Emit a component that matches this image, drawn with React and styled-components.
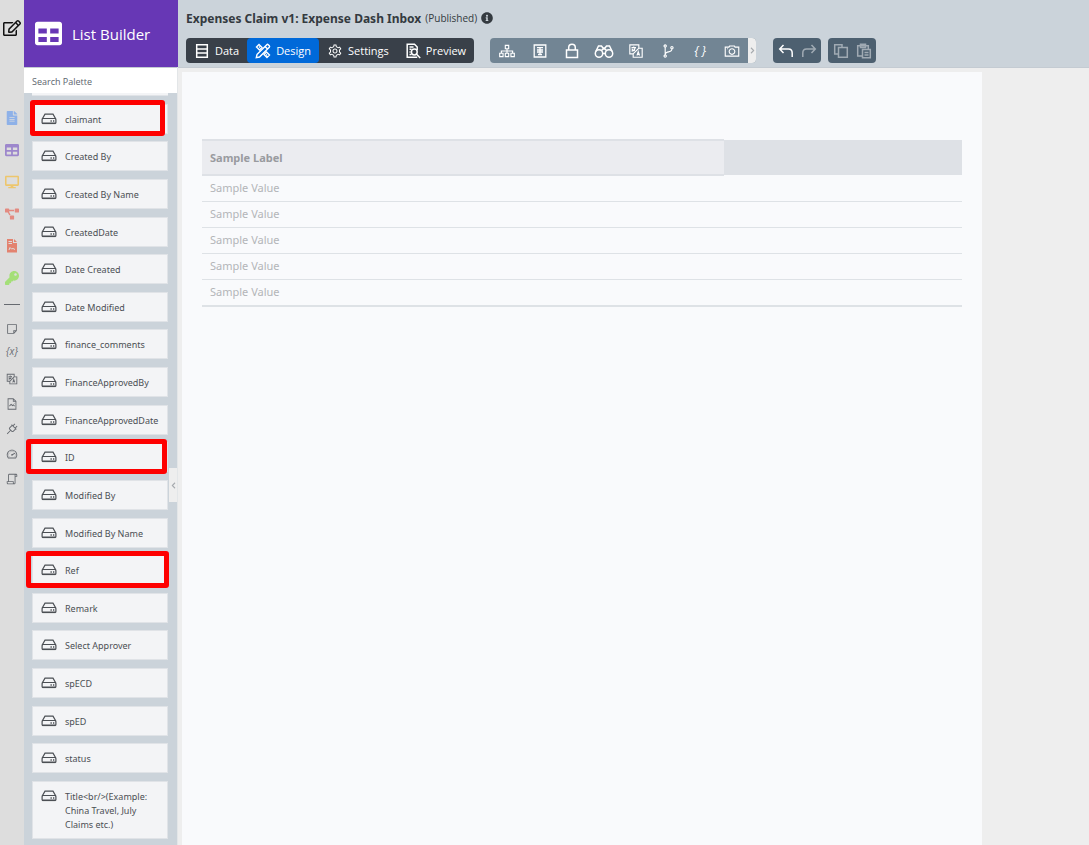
import React from "react";
import styled, { createGlobalStyle } from "styled-components";
import {
  FaChevronLeft,
  FaChevronRight,
  FaDesktop,
  FaFileAlt,
  FaInfoCircle,
  FaKey,
  FaProjectDiagram,
  FaRegEdit,
  FaTable,
} from "react-icons/fa";
import {
  LiaCameraSolid,
  LiaCodeBranchSolid,
  LiaCogSolid,
  LiaFileImage,
  LiaLanguageSolid,
  LiaPlugSolid,
  LiaScrollSolid,
  LiaSitemapSolid,
  LiaStickyNoteSolid,
  LiaTachometerAltSolid,
} from "react-icons/lia";

const fields = [
  { label: "claimant", mark: "-5px 2px -3px -3px" },
  { label: "Created By" },
  { label: "Created By Name" },
  { label: "CreatedDate" },
  { label: "Date Created" },
  { label: "Date Modified" },
  { label: "finance_comments" },
  { label: "FinanceApprovedBy" },
  { label: "FinanceApprovedDate" },
  { label: "ID", mark: "-4px 0 -3px -7px" },
  { label: "Modified By" },
  { label: "Modified By Name" },
  { label: "Ref", mark: "-5px -2px -4px -7px" },
  { label: "Remark" },
  { label: "Select Approver" },
  { label: "spECD" },
  { label: "spED" },
  { label: "status" },
  { label: "Title<br/>(Example: China Travel, July Claims etc.)" },
];

const rows = [1, 2, 3, 4, 5];

const Line = ({ children, size = 16, width = 1.5, box = 16 }) => (
  <svg
    width={size}
    height={size}
    viewBox={`0 0 ${box} ${box}`}
    fill='none'
    stroke='currentColor'
    strokeWidth={width}
    aria-hidden='true'
  >
    {children}
  </svg>
);

const DriveIcon = () => (
  <Line width={1.2}>
    <path d='M1.200 8 4 3.200h8L14.800 8' />
    <rect x='1.100' y='7.500' width='13.800' height='5' rx='1' />
    <path d='M1.500 12.300h13' strokeWidth='1.600' />
    <path d='M9.500 10h1.300M12 10h1.300' strokeWidth='1.400' />
  </Line>
);

const DataIcon = () => (
  <Line>
    <path d='M2.700 1.700h10.600v12.600H2.700zM2.700 5.900h10.600M2.700 10.100h10.600' />
  </Line>
);

const DesignIcon = () => (
  <Line width={1.4}>
    <path d='M1.500 4 4 1.500l3 3L4.500 7zM9 11.500 11.500 9l3 3-2.500 2.500z' />
    <path d='M4 4.500 5 3.500M11 12.500l1-1' />
    <path d='M2 11.500 11.800 1.700a1 1 0 0 1 1.400 0l1.100 1.100a1 1 0 0 1 0 1.400L4.500 14l-3.200.700zM10 3.500 12.500 6' />
  </Line>
);

const PreviewIcon = () => (
  <Line>
    <path d='M12.200 7V4L9.500 1.300H2.200v12.900h10' />
    <path d='M4.500 4h4M4.500 6.300h2M4.500 9h1M4.500 11.500h2' />
    <circle cx='9.300' cy='9' r='2.900' />
    <path d='m11.400 11.100 3.800 4' />
  </Line>
);

const CurrencyIcon = () => (
  <Line width={1.3}>
    <path d='M2.200 2h11.600v12H2.200z' />
    <path d='M5 4.700h6M5 7h6M5 9h6M8 4.500v7.500M6 11.500h4' />
  </Line>
);

const LockIcon = () => (
  <Line>
    <path d='M2.500 7h11v7.500h-11zM4.700 7V4.500a3.300 3.300 0 0 1 6.600 0V7' />
  </Line>
);

const BinocularsIcon = () => (
  <Line size={20} box={20} width={1.5}>
    <circle cx='5' cy='12.500' r='3.700' />
    <circle cx='15' cy='12.500' r='3.700' />
    <path d='M1.800 10.500 4.500 5h3L9 7h2l1.500-2h3l2.700 5.500M8.600 12.500h2.800M7.500 9.500 9 8h2l1.500 1.500' />
  </Line>
);

const UndoIcon = () => (
  <Line>
    <path d='M5.500 2 1.700 6l3.800 4M2 6h8.500q3.700 0 3.700 4v4' />
  </Line>
);

const RedoIcon = () => (
  <Line>
    <path d='M10.500 2 14.300 6l-3.800 4M14 6H5.500Q1.800 6 1.800 10v4' />
  </Line>
);

const CopyIcon = () => (
  <Line>
    <path d='M5 11H1.700V1.700H9V4M5.500 4.500h8.800v9.800H5.500z' />
  </Line>
);

const PasteIcon = () => (
  <Line>
    <path d='M6 13H1.700V2.700h10.600V6M4.500 2v2.500h5V1.200h-5zM6.500 6.500h7.800v8.300H6.500zM8.500 9.500h4M8.500 12h4' />
  </Line>
);

const ReportIcon = () => (
  <svg width='12' height='14' viewBox='0 0 12 14' aria-hidden='true'>
    <path fill='currentColor' d='M1 0h6v4h4v9.500H1z' />
    <path fill='currentColor' d='M8 0l3 3H8z' />
    <path
      fill='none'
      stroke='#dddddd'
      strokeWidth='1'
      d='M2.500 2.500H6M2.500 4.500H6M3 11l1-2.500L5.500 10l1.500-.500 2 1'
    />
  </svg>
);

const App = () => {
  return (
    <>
      <GlobalStyle />
      <Page>
        <Rail aria-label='Builders'>
          <EditLink href='#edit' aria-label='Edit'>
            <FaRegEdit />
          </EditLink>
          <RailLink href='#form' $color='#8eb1e8' aria-label='Form'>
            <FaFileAlt />
          </RailLink>
          <RailLink href='#list' $color='#9d87cc' aria-label='List'>
            <FaTable />
          </RailLink>
          <RailLink href='#ui' $color='#edc66d' aria-label='UI'>
            <FaDesktop />
          </RailLink>
          <RailLink href='#process' $color='#e38a80' aria-label='Process'>
            <FaProjectDiagram />
          </RailLink>
          <RailLink href='#report' $color='#e38370' aria-label='Report'>
            <ReportIcon />
          </RailLink>
          <RailLink href='#api' $color='#a4df78' aria-label='API'>
            <FaKey />
          </RailLink>
          <Divider />
          <ToolLink href='#notes' aria-label='Notes'>
            <LiaStickyNoteSolid />
          </ToolLink>
          <ToolLink href='#variables'>
            <i>{"{x}"}</i>
          </ToolLink>
          <ToolLink href='#language' aria-label='Language'>
            <LiaLanguageSolid />
          </ToolLink>
          <ToolLink href='#resources' aria-label='Resources'>
            <LiaFileImage />
          </ToolLink>
          <ToolLink href='#plugins' aria-label='Plugins'>
            <LiaPlugSolid />
          </ToolLink>
          <ToolLink href='#performance' aria-label='Performance'>
            <LiaTachometerAltSolid />
          </ToolLink>
          <ToolLink href='#logs' aria-label='Logs'>
            <LiaScrollSolid />
          </ToolLink>
        </Rail>

        <Sidebar>
          <Brand>
            <FaTable />
            <span>List Builder</span>
          </Brand>
          <Search placeholder='Search Palette' aria-label='Search Palette' />
          <Palette>
            <ItemEdge />
            {fields.map(({ label, mark }) => (
              <Item key={label}>
                <DriveIcon />
                <span>{label}</span>
                {mark && <Mark $inset={mark} />}
              </Item>
            ))}
          </Palette>
          <Collapse aria-label='Collapse palette'>
            <FaChevronLeft />
          </Collapse>
        </Sidebar>

        <Main>
          <Header>
            <Title>
              Expenses Claim v1: Expense Dash Inbox <small>(Published)</small>
              <FaInfoCircle />
            </Title>
            <Toolbar>
              <Tabs>
                <Tab>
                  <DataIcon />
                  Data
                </Tab>
                <Tab $active>
                  <DesignIcon />
                  Design
                </Tab>
                <Tab>
                  <LiaCogSolid />
                  Settings
                </Tab>
                <Tab>
                  <PreviewIcon />
                  Preview
                </Tab>
              </Tabs>
              <Tools>
                <Tool aria-label='Tree'>
                  <LiaSitemapSolid />
                </Tool>
                <Tool aria-label='Currency'>
                  <CurrencyIcon />
                </Tool>
                <Tool aria-label='Permission'>
                  <LockIcon />
                </Tool>
                <Tool aria-label='Find usages'>
                  <BinocularsIcon />
                </Tool>
                <Tool aria-label='Translate'>
                  <LiaLanguageSolid />
                </Tool>
                <Tool aria-label='Compare'>
                  <LiaCodeBranchSolid />
                </Tool>
                <Tool>
                  <i>{"{ }"}</i>
                </Tool>
                <Tool aria-label='Screenshot'>
                  <LiaCameraSolid />
                </Tool>
                <More aria-label='More tools'>
                  <FaChevronRight />
                </More>
              </Tools>
              <Actions>
                <Action aria-label='Undo'>
                  <UndoIcon />
                </Action>
                <Action aria-label='Redo' disabled>
                  <RedoIcon />
                </Action>
              </Actions>
              <Actions>
                <Action aria-label='Copy' disabled>
                  <CopyIcon />
                </Action>
                <Action aria-label='Paste' disabled>
                  <PasteIcon />
                </Action>
              </Actions>
            </Toolbar>
          </Header>
          <Workspace>
            <Canvas>
              <Table>
                <thead>
                  <tr>
                    <th scope='col'>Sample Label</th>
                    <td />
                  </tr>
                </thead>
                <tbody>
                  {rows.map((row) => (
                    <tr key={row}>
                      <td>Sample Value</td>
                      <td />
                    </tr>
                  ))}
                </tbody>
              </Table>
            </Canvas>
          </Workspace>
        </Main>
      </Page>
    </>
  );
};

const GlobalStyle = createGlobalStyle`
  *, *::before, *::after {
    box-sizing: border-box;
  }
  body {
    margin: 0;
    background: #eeeeee;
    font-family: "Open Sans", "Noto Sans", sans-serif;
    color: #343a40;
  }
  button, input {
    font-family: inherit;
    border: 0;
    padding: 0;
  }
  button {
    background: transparent;
    color: inherit;
    cursor: pointer;
  }
  svg {
    flex-shrink: 0;
  }
`;

const Page = styled.div`
  display: flex;
  height: 100vh;
`;

const Rail = styled.nav`
  display: flex;
  flex-direction: column;
  flex: 0 0 24px;
  background: #dddddd;
`;

const EditLink = styled.a`
  display: flex;
  justify-content: center;
  height: 102px;
  padding-top: 19px;
  font-size: 18px;
  color: #111111;
`;

const RailLink = styled.a`
  display: flex;
  align-items: center;
  justify-content: center;
  height: 32px;
  font-size: 14px;
  color: ${({ $color }) => $color};
`;

const Divider = styled.hr`
  width: 16px;
  margin: 10px auto 11px;
  border: 0;
  border-top: 1px solid #666a70;
`;

const ToolLink = styled.a`
  display: flex;
  align-items: center;
  justify-content: center;
  height: 25px;
  font-size: 14px;
  line-height: 1;
  color: #666a70;
  text-decoration: none;
  i {
    padding-bottom: 6px;
    font-size: 10px;
  }
`;

const Sidebar = styled.aside`
  position: relative;
  display: flex;
  flex-direction: column;
  flex: 0 0 154px;
  min-width: 0;
  background: #cbd3da;
  border-right: 1px solid #e3e6e8;
`;

const Brand = styled.div`
  display: flex;
  align-items: center;
  gap: 10px;
  height: 67px;
  margin-right: -1px;
  padding-left: 11px;
  background: #6737b5;
  color: #ffffff;
  font-size: 15px;
  svg {
    font-size: 27px;
  }
`;

const Search = styled.input`
  width: 100%;
  height: 26px;
  padding: 2px 8px 0;
  background: #ffffff;
  border-top: 1px solid #c4cbd2;
  font-size: 9px;
  color: #495057;
  outline: none;
  &::placeholder {
    color: #5c656e;
    opacity: 1;
  }
`;

const Palette = styled.ul`
  display: flex;
  flex: 1;
  flex-direction: column;
  justify-content: space-between;
  min-height: 0;
  margin: 0;
  padding: 0 9px 6px 8px;
  list-style: none;
`;

const ItemEdge = styled.li`
  height: 3px;
  background: #f3f4f6;
  border-bottom: 1px solid #e0e3e7;
`;

const Item = styled.li`
  position: relative;
  display: flex;
  gap: 8px;
  padding: 8px 2px 6px 8px;
  background: #f3f4f6;
  border: 1px solid #e0e3e7;
  font-family: "Noto Sans", sans-serif;
  font-size: 9px;
  line-height: 14px;
  color: #4b4f54;
  svg {
    margin-top: -2px;
  }
`;

const Mark = styled.span`
  position: absolute;
  inset: ${({ $inset }) => $inset};
  border: 5px solid #fe0000;
  border-radius: 3px;
`;

const Collapse = styled.button`
  position: absolute;
  right: 0;
  top: 468px;
  display: flex;
  align-items: center;
  justify-content: center;
  width: 8px;
  height: 34px;
  background: #eeeeee;
  font-size: 7px;
  color: #a5a9ad;
`;

const Main = styled.main`
  display: flex;
  flex: 1;
  flex-direction: column;
  min-width: 0;
`;

const Header = styled.header`
  height: 68px;
  padding: 8px;
  background: #cbd3da;
  border-bottom: 1px solid #c4cbd2;
`;

const Title = styled.h1`
  display: flex;
  align-items: center;
  gap: 4px;
  height: 20px;
  margin: 0 0 10px;
  font-family: "Noto Sans", sans-serif;
  font-size: 12px;
  font-weight: 700;
  white-space: nowrap;
  small {
    font-family: "Open Sans", sans-serif;
    font-size: 10px;
    font-weight: 400;
  }
  svg {
    font-size: 12px;
  }
`;

const Toolbar = styled.div`
  display: flex;
  height: 25px;
`;

const Tabs = styled.div`
  display: flex;
  margin-right: 16px;
  background: #394049;
  border-radius: 4px;
`;

const Tab = styled.button`
  display: flex;
  align-items: center;
  gap: 5px;
  padding: 0 8px;
  border-radius: 4px;
  background: ${({ $active }) => ($active ? "#0069d9" : "transparent")};
  font-size: 11px;
  color: #ffffff;
  svg {
    font-size: 16px;
  }
`;

const Tools = styled.div`
  display: flex;
  margin-right: 17px;
  overflow: hidden;
  background: #728594;
  border-radius: 4px;
`;

const Tool = styled.button`
  display: flex;
  align-items: center;
  justify-content: center;
  width: 32px;
  font-size: 18px;
  color: #ffffff;
  &:first-child {
    width: 34px;
  }
  i {
    font-size: 12px;
  }
`;

const More = styled.button`
  display: flex;
  align-items: center;
  justify-content: center;
  width: 8px;
  background: #eeeeee;
  font-size: 7px;
  color: #a5a9ad;
`;

const Actions = styled.div`
  display: flex;
  margin-right: 7px;
  padding: 0 1px;
  background: #4d6070;
  border-radius: 4px;
`;

const Action = styled.button`
  display: flex;
  align-items: center;
  justify-content: center;
  width: 23px;
  color: #ffffff;
  &:disabled {
    color: #a0aab3;
  }
`;

const Workspace = styled.div`
  flex: 1;
  padding: 4px 4px 0;
`;

const Canvas = styled.section`
  max-width: 800px;
  height: 100%;
  padding: 67px 20px 0;
  background: #f9fafc;
`;

const Table = styled.table`
  width: 100%;
  border-collapse: collapse;
  border-bottom: 2px solid #dee2e6;
  table-layout: fixed;
  font-family: "Noto Sans", sans-serif;
  font-size: 11px;
  line-height: 15px;
  color: #b3b5b8;
  th {
    width: 522px;
    padding: 9px 8px;
    background: #ebecf0;
    border: solid #dee1e6;
    border-width: 2px 0;
    text-align: left;
    font-weight: 700;
    color: #999b9f;
  }
  thead td {
    background: #dee1e6;
  }
  tbody td {
    padding: 4px 8px 6px;
    border-bottom: 1px solid #dee2e6;
  }
`;

export default App;
